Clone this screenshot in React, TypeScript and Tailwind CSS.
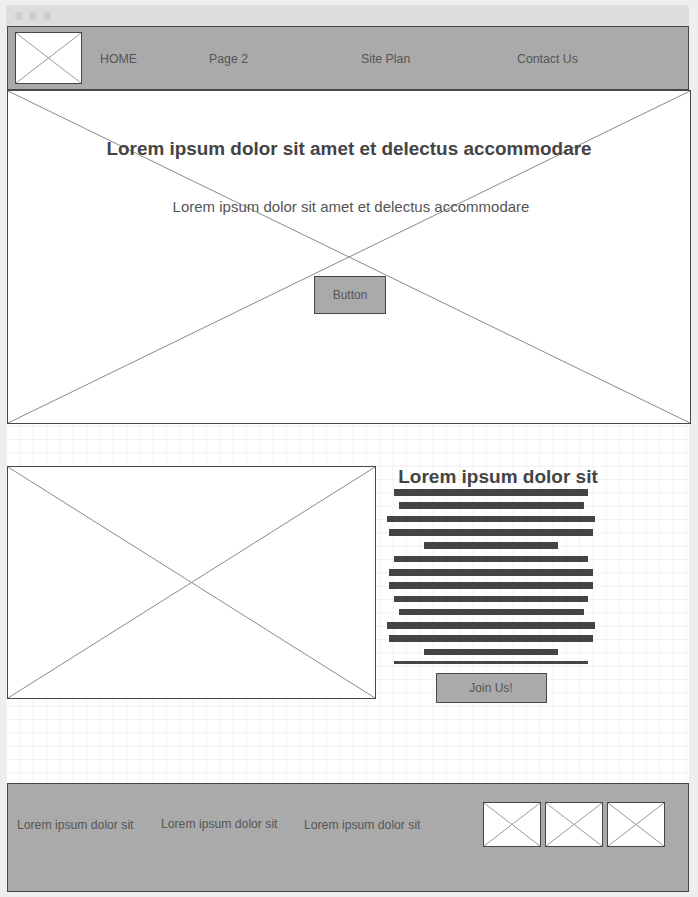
const Cross = ({ stroke = '#8a8a8a' }: { stroke?: string }) => (
  <svg className="absolute inset-0 w-full h-full" viewBox="0 0 100 100" preserveAspectRatio="none">
    <line x1="0" y1="0" x2="100" y2="100" stroke={stroke} strokeWidth="1" vectorEffect="non-scaling-stroke" />
    <line x1="100" y1="0" x2="0" y2="100" stroke={stroke} strokeWidth="1" vectorEffect="non-scaling-stroke" />
  </svg>
);

const Placeholder = ({ className, stroke }: { className: string; stroke?: string }) => (
  <div className={`relative bg-white border border-[#474747] ${className}`}>
    <Cross stroke={stroke} />
  </div>
);

const bars = [194, 185, 208, 204, 134, 194, 204, 204, 194, 185, 208, 204, 134];

const App = () => {
  return (
    <div className="h-[897px] bg-[#eeeeee] pt-[5px] pl-[6px] font-['Liberation_Sans',Arial,sans-serif] overflow-hidden">
      <div className="w-[683px]">
        <div className="h-[21px] bg-[#dddddd] rounded-t-[4px] flex items-center pl-[9px] gap-[6px]">
          <span className="w-2 h-2 rounded-full bg-[#cdcdcd]" />
          <span className="w-2 h-2 rounded-full bg-[#cdcdcd]" />
          <span className="w-2 h-2 rounded-full bg-[#cdcdcd]" />
        </div>

        <div className="bg-white bg-[linear-gradient(to_right,#f1f1f1_1px,transparent_1px),linear-gradient(to_bottom,#f1f1f1_1px,transparent_1px)] bg-[size:13.33px_13.33px]">
          {/* header */}
          <header className="ml-[1px] w-[682px] h-[64px] border border-[#474747] bg-[#aaaaaa] flex items-center text-[12.3px] text-[#555555]">
            <Placeholder className="ml-[7px] w-[67px] h-[52px]" stroke="#999999" />
            <span className="ml-[18px] w-[109px] pt-[2px]">HOME</span>
            <span className="w-[152px] pt-[2px]">Page 2</span>
            <span className="w-[156px] pt-[2px]">Site Plan</span>
            <span className="pt-[2px]">Contact Us</span>
          </header>

          {/* hero */}
          <section className="relative ml-[1px] w-[684px] h-[334px] border border-[#474747] bg-white flex flex-col items-center">
            <Cross />
            <h1 className="relative mt-[47px] text-[18.9px] leading-[22px] font-bold text-[#444444]">
              Lorem ipsum dolor sit amet et delectus accommodare
            </h1>
            <p className="relative mt-[38px] pl-[4px] text-[15px] leading-[18px] text-[#555555]">
              Lorem ipsum dolor sit amet et delectus accommodare
            </p>
            <button className="relative mt-[60px] ml-[2px] w-[72px] h-[38px] border border-[#474747] bg-[#aaaaaa] text-[12px] text-[#555555]">
              Button
            </button>
          </section>

          {/* content */}
          <section className="h-[359px] pt-[42px] flex items-start">
            <Placeholder className="ml-[1px] w-[369px] h-[233px]" />
            <div className="ml-[10px] w-[210px] flex flex-col items-center">
              <h2 className="pl-[14px] h-[20px] leading-[22px] text-[19px] font-bold text-[#444444] whitespace-nowrap">
                Lorem ipsum dolor sit
              </h2>
              <div className="mt-[3px] flex flex-col items-center gap-[6.67px]">
                {bars.map((w, i) => (
                  <div key={i} className="h-[6.67px] bg-[#444444]" style={{ width: w }} />
                ))}
                <div className="h-[3px] w-[194px] bg-[#444444] -mt-[1px]" />
              </div>
              <button className="mt-[9px] w-[111px] h-[30px] border border-[#474747] bg-[#aaaaaa] text-[12px] text-[#555555]">
                Join Us!
              </button>
            </div>
          </section>

          {/* footer */}
          <footer className="ml-[1px] w-[682px] h-[109px] border border-[#474747] bg-[#aaaaaa] flex items-start text-[12.2px] text-[#555555]">
            <span className="mt-[32px] ml-[9px] w-[144px]">Lorem ipsum dolor sit</span>
            <span className="mt-[31px] w-[143px]">Lorem ipsum dolor sit</span>
            <span className="mt-[32px] w-[179px]">Lorem ipsum dolor sit</span>
            <div className="mt-[18px] flex gap-[4px]">
              <Placeholder className="w-[58px] h-[45px]" stroke="#999999" />
              <Placeholder className="w-[58px] h-[45px]" stroke="#999999" />
              <Placeholder className="w-[58px] h-[45px]" stroke="#999999" />
            </div>
          </footer>
        </div>
      </div>
    </div>
  );
};

export default App;
